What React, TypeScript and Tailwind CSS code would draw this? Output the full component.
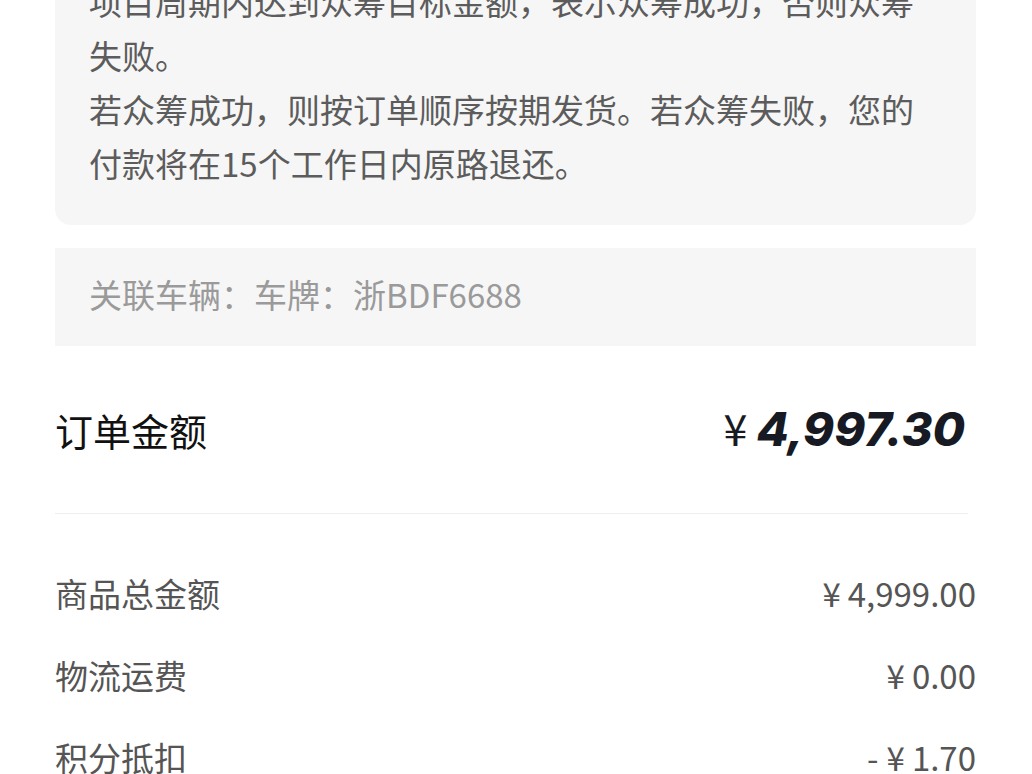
import React from 'react';

const rows = [
  { label: '商品总金额', sign: '', value: '4,999.00' },
  { label: '物流运费', sign: '', value: '0.00' },
  { label: '积分抵扣', sign: '- ', value: '1.70' },
];

export default function App() {
  return (
    <div
      className="w-[1032px] h-[774px] overflow-hidden bg-white px-[55px] pr-[56px]"
      style={{ fontFamily: '"Noto Sans CJK SC", "Noto Sans", sans-serif' }}
    >
      {/* Crowdfunding notice */}
      <div className="-mt-[60px] bg-[#f6f6f6] rounded-b-[16px] pt-[34px] pb-[35px] pl-[34px] pr-[30px] text-[33px] leading-[54px] text-[#5c5c5c]">
        <p>项目周期内达到众筹目标金额，表示众筹成功，否则众筹失败。</p>
        <p>若众筹成功，则按订单顺序按期发货。若众筹失败，您的付款将在15个工作日内原路退还。</p>
      </div>

      {/* Vehicle */}
      <div className="mt-[23px] bg-[#f6f6f6] pt-[19px] pb-[25px] px-[34px] text-[33px] leading-[54px] text-[#9a9a9a]">
        关联车辆：车牌：浙BDF6688
      </div>

      {/* Order total */}
      <div className="h-[167px] flex items-center justify-between pr-[11px]">
        <span className="text-[38px] text-[#111111]">订单金额</span>
        <span className="flex items-baseline text-[#171a23]">
          <span className="text-[43px] mr-[9px]">¥</span>
          <span
            className="text-[47px] font-extrabold italic"
            style={{ fontFamily: 'Inter, Roboto, sans-serif' }}
          >
            4,997.30
          </span>
        </span>
      </div>
      <div className="h-px bg-[#eeeeee] mr-[8px]" />

      {/* Breakdown */}
      <div className="pt-[39px]">
        {rows.map((r) => (
          <div key={r.label} className="h-[82px] flex items-center justify-between text-[33px] text-[#555555]">
            <span>{r.label}</span>
            <span className="flex items-center">
              {r.sign && <span className="mr-[8px]">-</span>}
              <span className="mr-[7px]">¥</span>
              <span>{r.value}</span>
            </span>
          </div>
        ))}
      </div>
    </div>
  );
}
